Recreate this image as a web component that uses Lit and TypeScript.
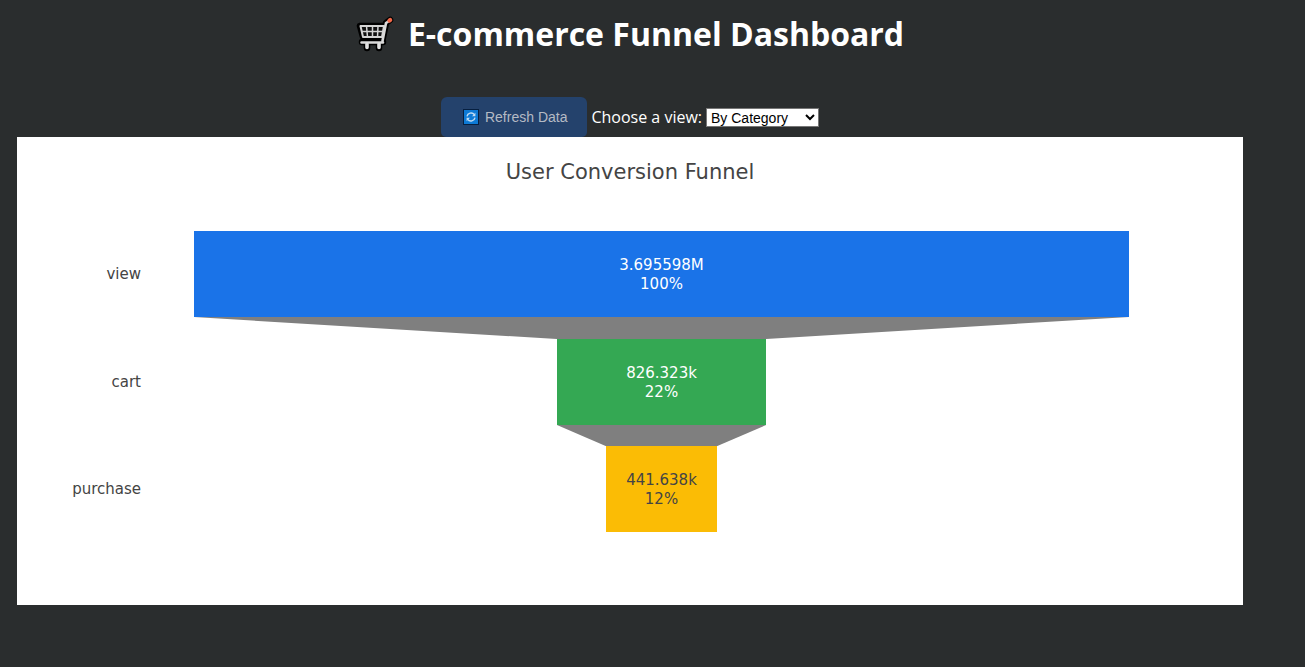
import { LitElement, html, css, svg } from "lit";
import { customElement, property, state } from "lit/decorators.js";

interface Stage {
  name: string;
  label: string;
  value: number;
  tone: string;
}

const STAGES: Stage[] = [
  { name: "view", label: "3.695598M", value: 3695598, tone: "blue" },
  { name: "cart", label: "826.323k", value: 826323, tone: "green" },
  { name: "purchase", label: "441.638k", value: 441638, tone: "amber" },
];

const cartIcon = html`<svg class="cart-icon" viewBox="0 0 38 38" aria-hidden="true">
  <g fill="none" stroke-linecap="round" stroke-linejoin="round">
    ${svg`
    <path d="M34 5 L30 8 L26 27 H8 M4 11 H28 L26 22 H7 Z M6 27 H27 M11 29 V33 M23 29 V33" stroke="#000" stroke-width="6.5" />
    <path d="M4.5 11 H28 L26 22 H7 Z" fill="#111" stroke="#d4d4d4" stroke-width="2" />
    <path d="M10.5 11 L11.5 22 M16.5 11 V22 M22 11 L21.5 22 M6 16.5 H27" stroke="#d4d4d4" stroke-width="1.5" />
    <path d="M33 6 L30 8 L26.5 26 M5.5 27.5 H27" stroke="#d9d9d9" stroke-width="2.6" />
    <path d="M11 29 V32.5 M23 29 V32.5" stroke="#e2e2e2" stroke-width="3.6" />
    <path d="M33.4 5.6 L34.2 5" stroke="#f4694a" stroke-width="4.2" />`}
  </g>
</svg>`;

const refreshIcon = html`<svg class="refresh-icon" viewBox="0 0 16 16" aria-hidden="true">
  <rect x="0.5" y="0.5" width="15" height="15" fill="#0d7ad6" stroke="#061f40" />
  <g fill="none" stroke="#c3dcf2" stroke-width="1.4">
    <path d="M4 7.4 A4.1 4.1 0 0 1 11.3 5.6" />
    <path d="M12 8.6 A4.1 4.1 0 0 1 4.7 10.4" />
  </g>
  <path d="M12.4 3.8 V7.2 H9 Z M3.6 12.2 V8.8 H7 Z" fill="#c3dcf2" />
</svg>`;

@customElement("funnel-chart")
export class FunnelChart extends LitElement {
  @property({ attribute: false }) stages: Stage[] = [];

  static styles = css`
    :host {
      display: block;
      background: #fff;
      color: #444;
      font-family: Verdana, "DejaVu Sans", sans-serif;
      font-size: 15px;
      line-height: 19px;
      padding: 21px 114px 73px 24px;
    }
    .title {
      margin: 0 -90px 45px 0;
      font-size: 21px;
      line-height: 28px;
      font-weight: 400;
      text-align: center;
    }
    .plot {
      display: grid;
      grid-template-columns: 100px 1fr;
      grid-template-rows: 86px 22px 86px 21px 86px;
      column-gap: 53px;
    }
    .name {
      grid-column: 1;
      align-self: center;
      padding-top: 1px;
      text-align: right;
    }
    .bar {
      grid-column: 2;
      justify-self: center;
      box-sizing: border-box;
      display: flex;
      flex-direction: column;
      justify-content: center;
      align-items: center;
      padding-top: 2px;
      color: #fff;
    }
    .blue {
      background: #1a73e8;
    }
    .green {
      background: #34a853;
    }
    .amber {
      background: #fbbc05;
      color: #444;
    }
    .link {
      grid-column: 2;
      display: block;
      width: 100%;
      height: 100%;
      min-height: 0;
      fill: #7f7f7f;
    }
  `;

  private share(stage: Stage) {
    return (stage.value / this.stages[0].value) * 100;
  }

  render() {
    return html`
      <h2 class="title">User Conversion Funnel</h2>
      <div class="plot">
        ${this.stages.map((stage, i) => {
          const next = this.stages[i + 1];
          const a = this.share(stage) / 2;
          const b = next ? this.share(next) / 2 : 0;
          return html`
            <div class="name">${stage.name}</div>
            <div class="bar ${stage.tone}" style="width:${this.share(stage)}%">
              <span>${stage.label}</span>
              <span>${Math.round(this.share(stage))}%</span>
            </div>
            ${next
              ? html`<svg class="link" viewBox="0 0 100 10" preserveAspectRatio="none" aria-hidden="true">
                  <polygon points="${50 - a},0 ${50 + a},0 ${50 + b},10 ${50 - b},10" />
                </svg>`
              : null}
          `;
        })}
      </div>
    `;
  }
}

@customElement("app-root")
export class AppRoot extends LitElement {
  @state() private stages = STAGES;

  static styles = css`
    :host {
      display: block;
      box-sizing: border-box;
      min-height: 100vh;
      padding: 10px 62px 62px 17px;
      background: #2a2d2e;
      color: #fff;
      font-family: "Segoe UI", "Open Sans", sans-serif;
    }
    .heading {
      display: flex;
      justify-content: center;
      align-items: center;
      gap: 14px;
      margin: 0 0 39px;
      font-size: 32px;
      line-height: 48px;
      font-weight: 700;
    }
    .cart-icon {
      width: 38px;
      height: 38px;
    }
    .controls {
      display: flex;
      justify-content: center;
      align-items: center;
      gap: 4px;
      font-size: 16px;
    }
    .refresh {
      display: flex;
      align-items: center;
      gap: 6px;
      height: 40px;
      padding: 0 20px 0 22px;
      border: 0;
      border-radius: 6px 6px 5px 5px;
      background: #24426c;
      color: #b4bac4;
      font: 14px "Liberation Sans", Arial, sans-serif;
    }
    .refresh-icon {
      width: 16px;
      height: 16px;
    }
    .view {
      width: 113px;
      height: 19px;
      padding: 0;
      border: 1px solid #767676;
      border-radius: 0;
      background: #fff;
      color: #000;
      font: 14px "Liberation Sans", Arial, sans-serif;
    }
  `;

  render() {
    return html`
      <h1 class="heading">${cartIcon}<span>E-commerce Funnel Dashboard</span></h1>
      <div class="controls">
        <button class="refresh" type="button">${refreshIcon}<span>Refresh Data</span></button>
        <label for="view">Choose a view:</label>
        <select class="view" id="view">
          <option>By Category</option>
        </select>
      </div>
      <funnel-chart .stages=${this.stages}></funnel-chart>
    `;
  }
}
